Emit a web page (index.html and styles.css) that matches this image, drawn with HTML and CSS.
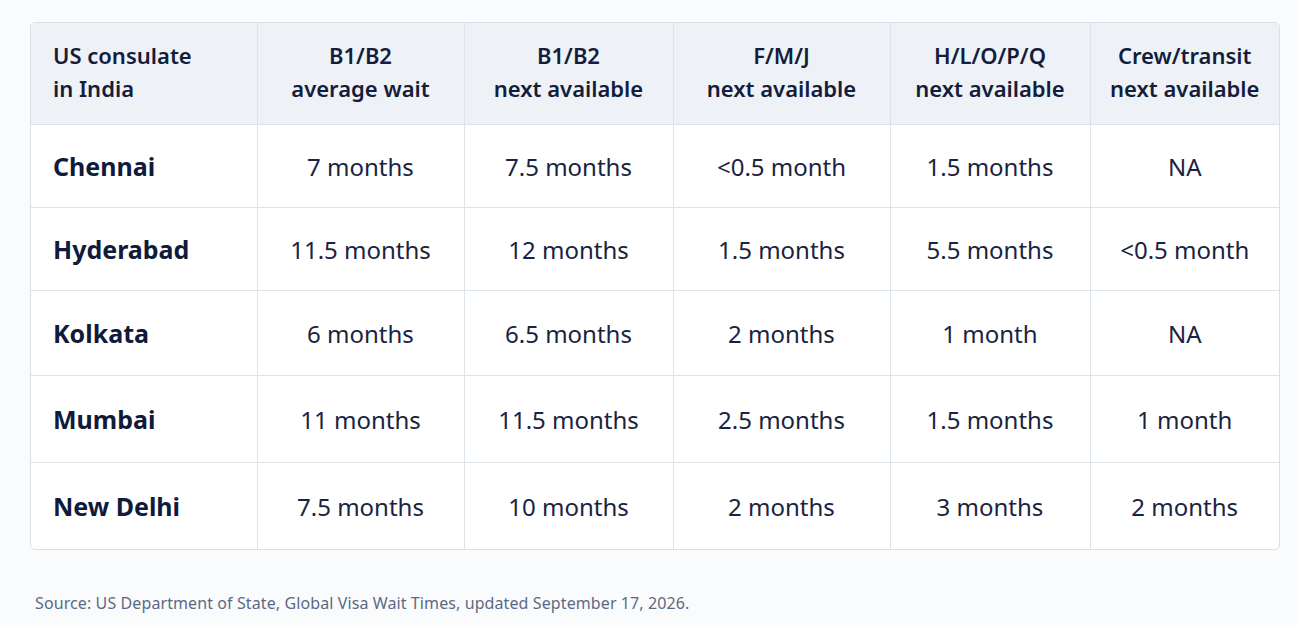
FILE: index.html
```html
<!DOCTYPE html>
<html lang="en">
<head>
<meta charset="utf-8">
<title>US visa wait times in India</title>
<link rel="stylesheet" href="styles.css">
</head>
<body>
<main class="page">
  <div class="table-wrap">
    <table class="wait-table">
      <colgroup>
        <col class="c1"><col class="c2"><col class="c3"><col class="c4"><col class="c5"><col class="c6">
      </colgroup>
      <thead>
        <tr>
          <th class="first">US consulate<br>in India</th>
          <th>B1/B2<br>average wait</th>
          <th>B1/B2<br>next available</th>
          <th>F/M/J<br>next available</th>
          <th>H/L/O/P/Q<br>next available</th>
          <th>Crew/transit<br>next available</th>
        </tr>
      </thead>
      <tbody>
        <tr class="r1"><th class="city">Chennai</th><td>7 months</td><td>7.5 months</td><td>&lt;0.5 month</td><td>1.5 months</td><td>NA</td></tr>
        <tr class="r2"><th class="city">Hyderabad</th><td>11.5 months</td><td>12 months</td><td>1.5 months</td><td>5.5 months</td><td>&lt;0.5 month</td></tr>
        <tr class="r3"><th class="city">Kolkata</th><td>6 months</td><td>6.5 months</td><td>2 months</td><td>1 month</td><td>NA</td></tr>
        <tr class="r4"><th class="city">Mumbai</th><td>11 months</td><td>11.5 months</td><td>2.5 months</td><td>1.5 months</td><td>1 month</td></tr>
        <tr class="r5"><th class="city">New Delhi</th><td>7.5 months</td><td>10 months</td><td>2 months</td><td>3 months</td><td>2 months</td></tr>
      </tbody>
    </table>
  </div>
  <p class="source">Source: US Department of State, Global Visa Wait Times, updated September 17, 2026.</p>
</main>
</body>
</html>
```
FILE: styles.css
```css
html, body {
  margin: 0;
  padding: 0;
  background: #fafbfc;
}
body {
  font-family: "Noto Sans", "Open Sans", sans-serif;
  color: #141d3b;
}
.page {
  padding: 22px 18px 0 30px;
}
.table-wrap {
  width: 1248px;
  border: 1px solid #d9dfe7;
  border-radius: 5px;
  overflow: hidden;
  background: #ffffff;
}
.wait-table {
  width: 100%;
  border-collapse: collapse;
  table-layout: fixed;
}
.c1 { width: 226px; }
.c2 { width: 207px; }
.c3 { width: 209px; }
.c4 { width: 217px; }
.c5 { width: 200px; }
.c6 { width: 189px; }
.wait-table th,
.wait-table td {
  border: 1px solid #dde3ea;
  padding: 0;
  text-align: center;
  vertical-align: middle;
}
.wait-table tr > :first-child { border-left: none; }
.wait-table tr > :last-child { border-right: none; }
.wait-table thead th { border-top: none; }
.wait-table tbody tr:last-child > * { border-bottom: none; }
.wait-table thead th {
  background: #eef2f7;
  height: 97px;
  padding-bottom: 4px;
  font-size: 22px;
  font-weight: 600;
  line-height: 33px;
  color: #141d3b;
}
.wait-table thead th.first {
  text-align: left;
  padding-left: 22px;
}
.wait-table th.city {
  text-align: left;
  padding-left: 22px;
  font-size: 25px;
  font-weight: 700;
  color: #101a3a;
}
.wait-table td {
  font-size: 24px;
  font-weight: 400;
  color: #1a2340;
}
.r1 > *, .r2 > * { height: 82px; }
.r3 > * { height: 84px; }
.r4 > *, .r5 > * { height: 86px; }
.source {
  margin: 42px 0 0 5px;
  font-size: 16px;
  letter-spacing: 0.1px;
  color: #5b6a84;
}
```
